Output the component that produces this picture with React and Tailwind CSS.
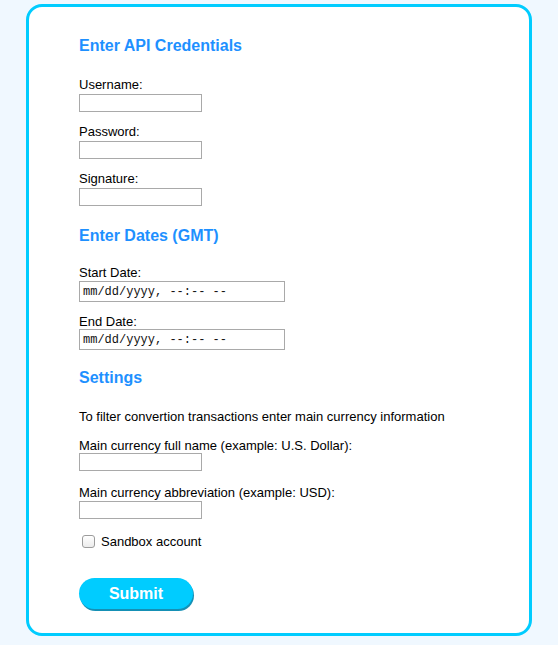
import React from 'react';

const font = { fontFamily: '"Liberation Sans", Arial, sans-serif' };

function Heading({ children, className = '' }) {
  return (
    <h2 className={`text-[16px] leading-[18px] font-bold text-[#1e90ff] ${className}`}>
      {children}
    </h2>
  );
}

function Label({ children, className = '' }) {
  return <div className={`text-[13px] leading-[15px] text-black ${className}`}>{children}</div>;
}

function TextField({ className = '', type = 'text' }) {
  return (
    <input
      type={type}
      className={`block w-[123px] h-[18px] border border-[#a9a9a9] bg-white outline-none ${className}`}
    />
  );
}

function DateField({ className = '' }) {
  return (
    <div
      className={`w-[206px] h-[21px] border border-[#a9a9a9] bg-white pl-[3px] flex items-center text-[12px] text-[#111] whitespace-pre font-[Liberation_Mono] ${className}`}
    >
      mm/dd/yyyy, --:-- --
    </div>
  );
}

export default function App() {
  return (
    <div className="min-h-[645px] bg-[#f0f8ff] pt-[4px] pb-[9px]" style={font}>
      <form
        className="ml-[26px] w-[506px] h-[632px] border-[3px] border-[#00ccff] rounded-[16px] bg-white pl-[50px] pt-[30px]"
        onSubmit={(e) => e.preventDefault()}
      >
        <Heading>Enter API Credentials</Heading>

        <Label className="mt-[22px]">Username:</Label>
        <TextField className="mt-[2px]" />

        <Label className="mt-[12px]">Password:</Label>
        <TextField className="mt-[2px]" type="password" />

        <Label className="mt-[12px]">Signature:</Label>
        <TextField className="mt-[2px]" />

        <Heading className="mt-[21px]">Enter Dates (GMT)</Heading>

        <Label className="mt-[20px]">Start Date:</Label>
        <DateField className="mt-[1px]" />

        <Label className="mt-[12px]">End Date:</Label>
        <DateField />

        <Heading className="mt-[19px]">Settings</Heading>

        <Label className="mt-[22px]">To filter convertion transactions enter main currency information</Label>

        <Label className="mt-[14px]">Main currency full name (example: U.S. Dollar):</Label>
        <TextField />

        <Label className="mt-[14px]">Main currency abbreviation (example: USD):</Label>
        <TextField className="mt-[1px]" />

        <label className="mt-[15px] flex items-center h-[15px] text-[13px] text-black">
          <input
            type="checkbox"
            className="appearance-none ml-[3px] w-[13px] h-[13px] rounded-[3px] border border-[#9c9c9c] bg-gradient-to-b from-white to-[#ececec]"
          />
          <span className="ml-[6px]">Sandbox account</span>
        </label>

        <button
          type="submit"
          className="mt-[29px] w-[114px] h-[31px] rounded-full bg-[#00ccff] text-white text-[16px] font-bold shadow-[1px_2px_0_#1590b5]"
        >
          Submit
        </button>
      </form>
    </div>
  );
}
